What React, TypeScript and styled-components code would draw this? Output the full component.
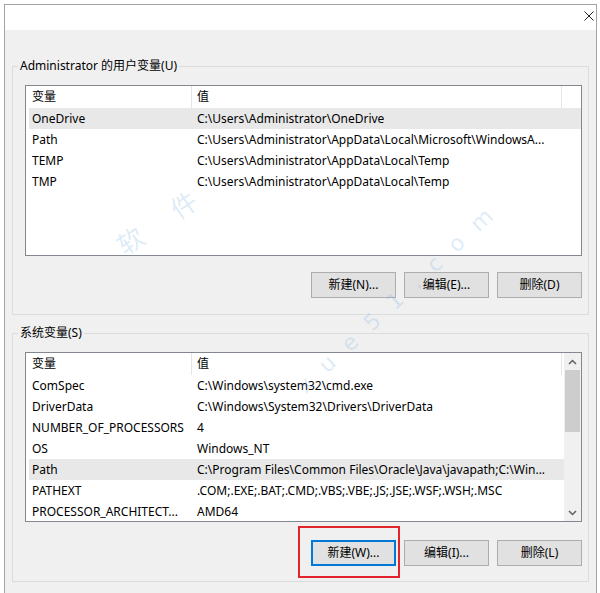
import React from "react";
import styled, { createGlobalStyle } from "styled-components";

const GlobalStyle = createGlobalStyle`
  html, body { margin: 0; padding: 0; background: #ffffff; }
  body {
    width: 600px; height: 593px; overflow: hidden;
    font-family: "Noto Sans", "Noto Sans CJK SC", sans-serif;
    font-size: 12px; color: #000;
  }
  *, *::before, *::after { box-sizing: border-box; }
`;

const Window = styled.div`
  position: relative;
  margin: 4px 0 0 4px;
  width: 593px;
  height: 589px;
  border: 1px solid #a3a3a3;
  border-bottom: none;
  display: flex;
  flex-direction: column;
  overflow: hidden;
`;

const TitleBar = styled.div`
  height: 25px;
  flex: none;
  background: #ffffff;
  display: flex;
  justify-content: flex-end;
  align-items: flex-start;
  padding: 6px 2px 0 0;
`;

const CloseIcon = styled.svg`
  width: 10px;
  height: 10px;
  display: block;
`;

const Body = styled.div`
  flex: 1;
  background: #f0f0f0;
  padding: 28px 7px 0 7px;
  display: flex;
  flex-direction: column;
`;

const GroupBox = styled.fieldset<{ $gap?: number }>`
  margin: ${(p) => p.$gap ?? 0}px 0 0 0;
  padding: 0;
  border: 1px solid #dcdcdc;
  min-width: 0;
`;

const Legend = styled.legend`
  margin-left: 5px;
  padding: 0 2px;
  font-size: 12px;
  line-height: 16px;
  color: #000;
`;

const GroupContent = styled.div<{ $bottom: number }>`
  padding: 11px 6px ${(p) => p.$bottom}px 12px;
  display: flex;
  flex-direction: column;
`;

const ListView = styled.div<{ $h: number }>`
  height: ${(p) => p.$h}px;
  border: 1px solid #828790;
  background: #ffffff;
  display: flex;
  overflow: hidden;
`;

const ListBody = styled.div`
  flex: 1;
  min-width: 0;
  padding-left: 3px;
`;

const HeaderRow = styled.div`
  display: grid;
  grid-template-columns: 163px 370px;
  height: 22px;
`;

const HeaderCell = styled.div<{ $pad: number }>`
  line-height: 22px;
  padding-left: ${(p) => p.$pad}px;
  border-right: 1px solid #e5e5e5;
  white-space: nowrap;
`;

const Row = styled.div<{ $selected?: boolean }>`
  display: grid;
  grid-template-columns: 163px 370px;
  height: 21px;
  background: ${(p) => (p.$selected ? "#e8e8e8" : "transparent")};
`;

const Cell = styled.div<{ $pad: number }>`
  line-height: 21px;
  padding-left: ${(p) => p.$pad}px;
  white-space: nowrap;
  overflow: hidden;
`;

const ScrollBar = styled.div`
  width: 17px;
  flex: none;
  background: #f0f0f0;
  display: flex;
  flex-direction: column;
`;

const ScrollArrow = styled.div`
  height: 17px;
  display: flex;
  align-items: center;
  justify-content: center;
  flex: none;
`;

const ScrollTrack = styled.div`
  flex: 1;
  padding: 0 1px;
`;

const ScrollThumb = styled.div`
  height: 62px;
  background: #cdcdcd;
`;

const ButtonRow = styled.div<{ $top: number }>`
  margin-top: ${(p) => p.$top}px;
  display: flex;
  justify-content: flex-end;
  gap: 8px;
`;

const Button = styled.button<{ $focused?: boolean }>`
  width: 85px;
  height: 26px;
  padding: 0;
  margin: 0;
  background: #e1e1e1;
  border: 1px solid ${(p) => (p.$focused ? "#0078d7" : "#adadad")};
  box-shadow: ${(p) => (p.$focused ? "inset 0 0 0 1px #0078d7" : "none")};
  font-family: inherit;
  font-size: 12px;
  color: #000;
  line-height: 24px;
`;

const Annotated = styled.span`
  position: relative;
  display: flex;
  &::after {
    content: "";
    position: absolute;
    top: -14px;
    left: -13px;
    right: -4px;
    bottom: -12px;
    border: 2px solid #e3242b;
    pointer-events: none;
  }
`;

const Watermark = styled.span<{ $x: number; $y: number; $angle: number; $size: number; $spacing: number }>`
  position: absolute;
  left: ${(p) => p.$x}px;
  top: ${(p) => p.$y}px;
  transform: translate(-50%, -50%) rotate(${(p) => p.$angle}deg);
  font-family: "DejaVu Sans", "Noto Sans CJK SC", sans-serif;
  font-size: ${(p) => p.$size}px;
  letter-spacing: ${(p) => p.$spacing}px;
  color: rgba(110, 170, 225, 0.24);
  white-space: nowrap;
  pointer-events: none;
`;

type Var = { name: string; value: string; selected?: boolean };

const userVars: Var[] = [
  { name: "OneDrive", value: "C:\\Users\\Administrator\\OneDrive", selected: true },
  { name: "Path", value: "C:\\Users\\Administrator\\AppData\\Local\\Microsoft\\WindowsA..." },
  { name: "TEMP", value: "C:\\Users\\Administrator\\AppData\\Local\\Temp" },
  { name: "TMP", value: "C:\\Users\\Administrator\\AppData\\Local\\Temp" },
];

const sysVars: Var[] = [
  { name: "ComSpec", value: "C:\\Windows\\system32\\cmd.exe" },
  { name: "DriverData", value: "C:\\Windows\\System32\\Drivers\\DriverData" },
  { name: "NUMBER_OF_PROCESSORS", value: "4" },
  { name: "OS", value: "Windows_NT" },
  { name: "Path", value: "C:\\Program Files\\Common Files\\Oracle\\Java\\javapath;C:\\Win...", selected: true },
  { name: "PATHEXT", value: ".COM;.EXE;.BAT;.CMD;.VBS;.VBE;.JS;.JSE;.WSF;.WSH;.MSC" },
  { name: "PROCESSOR_ARCHITECT...", value: "AMD64" },
];

const Chevron = ({ up }: { up: boolean }) => (
  <svg width="9" height="6" viewBox="0 0 9 6">
    <path
      d={up ? "M1 5 L4.5 1.5 L8 5" : "M1 1 L4.5 4.5 L8 1"}
      fill="none"
      stroke="#606060"
      strokeWidth="1.5"
    />
  </svg>
);

const VarList = ({ vars, h, scroll }: { vars: Var[]; h: number; scroll?: boolean }) => (
  <ListView $h={h}>
    <ListBody>
      <HeaderRow>
        <HeaderCell $pad={3}>变量</HeaderCell>
        <HeaderCell $pad={5}>值</HeaderCell>
      </HeaderRow>
      {vars.map((v) => (
        <Row key={v.name + v.value} $selected={v.selected}>
          <Cell $pad={3}>{v.name}</Cell>
          <Cell $pad={5}>{v.value}</Cell>
        </Row>
      ))}
    </ListBody>
    {scroll && (
      <ScrollBar>
        <ScrollArrow>
          <Chevron up />
        </ScrollArrow>
        <ScrollTrack>
          <ScrollThumb />
        </ScrollTrack>
        <ScrollArrow>
          <Chevron up={false} />
        </ScrollArrow>
      </ScrollBar>
    )}
  </ListView>
);

export default function App() {
  return (
    <>
      <GlobalStyle />
      <Window>
        <TitleBar>
          <CloseIcon viewBox="0 0 10 10">
            <path d="M0.5 0.5 L9.5 9.5 M9.5 0.5 L0.5 9.5" stroke="#222" strokeWidth="1" fill="none" />
          </CloseIcon>
        </TitleBar>
        <Body>
          <GroupBox>
            <Legend>Administrator 的用户变量(U)</Legend>
            <GroupContent $bottom={16}>
              <VarList vars={userVars} h={171} />
              <ButtonRow $top={16}>
                <Button>新建(N)...</Button>
                <Button>编辑(E)...</Button>
                <Button>删除(D)</Button>
              </ButtonRow>
            </GroupContent>
          </GroupBox>
          <GroupBox $gap={10}>
            <Legend>系统变量(S)</Legend>
            <GroupContent $bottom={15}>
              <VarList vars={sysVars} h={170} scroll />
              <ButtonRow $top={18}>
                <Annotated>
                  <Button $focused>新建(W)...</Button>
                </Annotated>
                <Button>编辑(I)...</Button>
                <Button>删除(L)</Button>
              </ButtonRow>
            </GroupContent>
          </GroupBox>
        </Body>
        <Watermark $x={167} $y={206} $angle={-34} $size={26} $spacing={38}>
          软件
        </Watermark>
        <Watermark $x={396} $y={290} $angle={-43} $size={22} $spacing={17}>
          xue51.com
        </Watermark>
      </Window>
    </>
  );
}
